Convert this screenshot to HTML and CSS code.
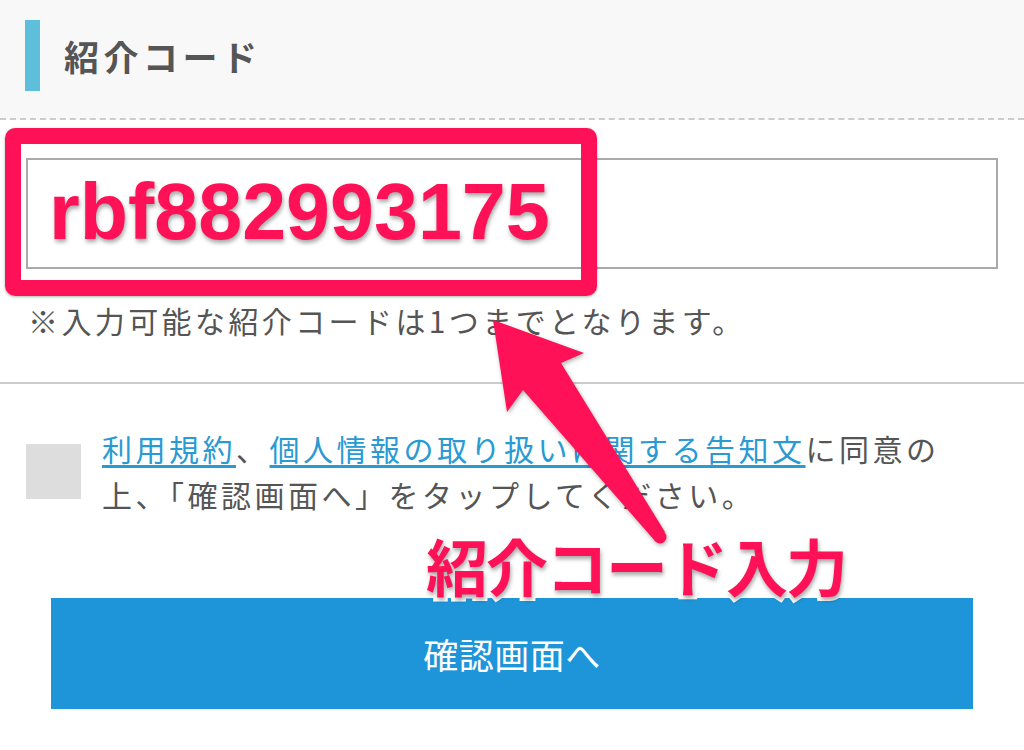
FILE: index.html
```html
<!DOCTYPE html>
<html lang="ja">
<head>
    <meta charset="UTF-8">
    <meta name="viewport" content="width=device-width, initial-scale=1.0">
    <title>紹介コード</title>
    <link rel="stylesheet" href="styles.css">
</head>
<body>
    <div class="page">
        <div class="section-head">
            <span class="head-bar"></span>
            <h2>紹介コード</h2>
        </div>

        <div class="code-field">
            <input type="text" class="code-input" id="code">
            <p class="note">※入力可能な紹介コードは1つまでとなります。</p>
        </div>

        <div class="agree">
            <span class="check"></span>
            <p class="agree-text"><a href="#">利用規約</a>、<a href="#">個人情報の取り扱いに関する告知文</a>に同意の上、「確認画面へ」をタップしてください。</p>
        </div>

        <button class="submit">確認画面へ</button>

        <!-- annotations drawn over the form -->
        <svg class="arrow" width="1024" height="750" viewBox="0 0 1024 750">
            <polygon points="493,320 584,353 561,363 665,532 655,541 523,390 507,412" fill="#fe1157"/>
            <circle cx="660" cy="537" r="6.5" fill="#fe1157"/>
        </svg>
        <div class="mark-box"><span class="mark-code">rbf882993175</span></div>
        <div class="mark-label">紹介コード入力</div>
    </div>
</body>
</html>
```

FILE: styles.css
```css
body {
    margin: 0;
    background-color: #fff;
    font-family: "Noto Sans CJK JP", "Noto Sans", sans-serif;
    color: #555;
}

.page {
    position: relative;
    width: 1024px;
    height: 750px;
    overflow: hidden;
}

.section-head {
    height: 120px;
    box-sizing: border-box;
    padding: 0 0 8px 25px;
    display: flex;
    align-items: center;
    gap: 24px;
    background-color: #f8f8f8;
    border-bottom: 2px dashed #ccc;
}

.head-bar {
    width: 15px;
    height: 71px;
    background-color: #5ebfdb;
}

.section-head h2 {
    margin: 0;
    font-size: 35px;
    font-weight: bold;
    letter-spacing: 4.5px;
    color: #555;
}

.code-field {
    padding: 38px 26px 0;
    border-bottom: 2px solid #ccc;
}

.code-input {
    display: block;
    width: 100%;
    height: 111px;
    box-sizing: border-box;
    border: 2px solid #aaa;
    border-radius: 0;
    outline: none;
}

.note {
    margin: 31px 0 0 2px;
    padding-bottom: 42px;
    font-size: 30px;
    line-height: 40px;
    letter-spacing: 3.4px;
}

.agree {
    display: flex;
    align-items: center;
    gap: 21px;
    padding: 41px 26px 0;
}

.check {
    flex: none;
    width: 55px;
    height: 55px;
    background-color: #ddd;
}

.agree-text {
    margin: 0;
    max-width: 860px;
    font-size: 30px;
    line-height: 46px;
    letter-spacing: 3.5px;
}

.agree-text a {
    color: #2a9ad3;
    text-decoration: underline;
    text-underline-offset: 4px;
}

.submit {
    display: block;
    width: 922px;
    height: 111px;
    margin: 81px 0 0 51px;
    border: none;
    background-color: #1e95d9;
    color: #fff;
    font-family: "Noto Sans CJK JP", sans-serif;
    font-size: 35px;
    letter-spacing: 0.5px;
    cursor: pointer;
}

.arrow {
    position: absolute;
    left: 0;
    top: 0;
    pointer-events: none;
    filter: drop-shadow(1px 2px 2px rgba(0, 0, 0, 0.3));
}

.mark-box {
    position: absolute;
    left: 5px;
    top: 128px;
    width: 592px;
    height: 168px;
    box-sizing: border-box;
    border: 16px solid #fe1157;
    border-radius: 10px;
    display: flex;
    align-items: center;
    padding-left: 28px;
    box-shadow: 0 1px 3px rgba(0, 0, 0, 0.3);
}

.mark-code {
    font-family: "Liberation Sans", Arial, sans-serif;
    font-size: 79px;
    font-weight: bold;
    color: #fe1157;
    -webkit-text-stroke: 8px #fff;
    paint-order: stroke fill;
    text-shadow: 1px 3px 4px rgba(0, 0, 0, 0.35);
}

.mark-label {
    position: absolute;
    left: 426px;
    top: 520px;
    font-size: 62px;
    font-weight: bold;
    letter-spacing: -2px;
    color: #fe1157;
    -webkit-text-stroke: 8px #fff;
    paint-order: stroke fill;
    text-shadow: 1px 3px 4px rgba(0, 0, 0, 0.35);
}
```
